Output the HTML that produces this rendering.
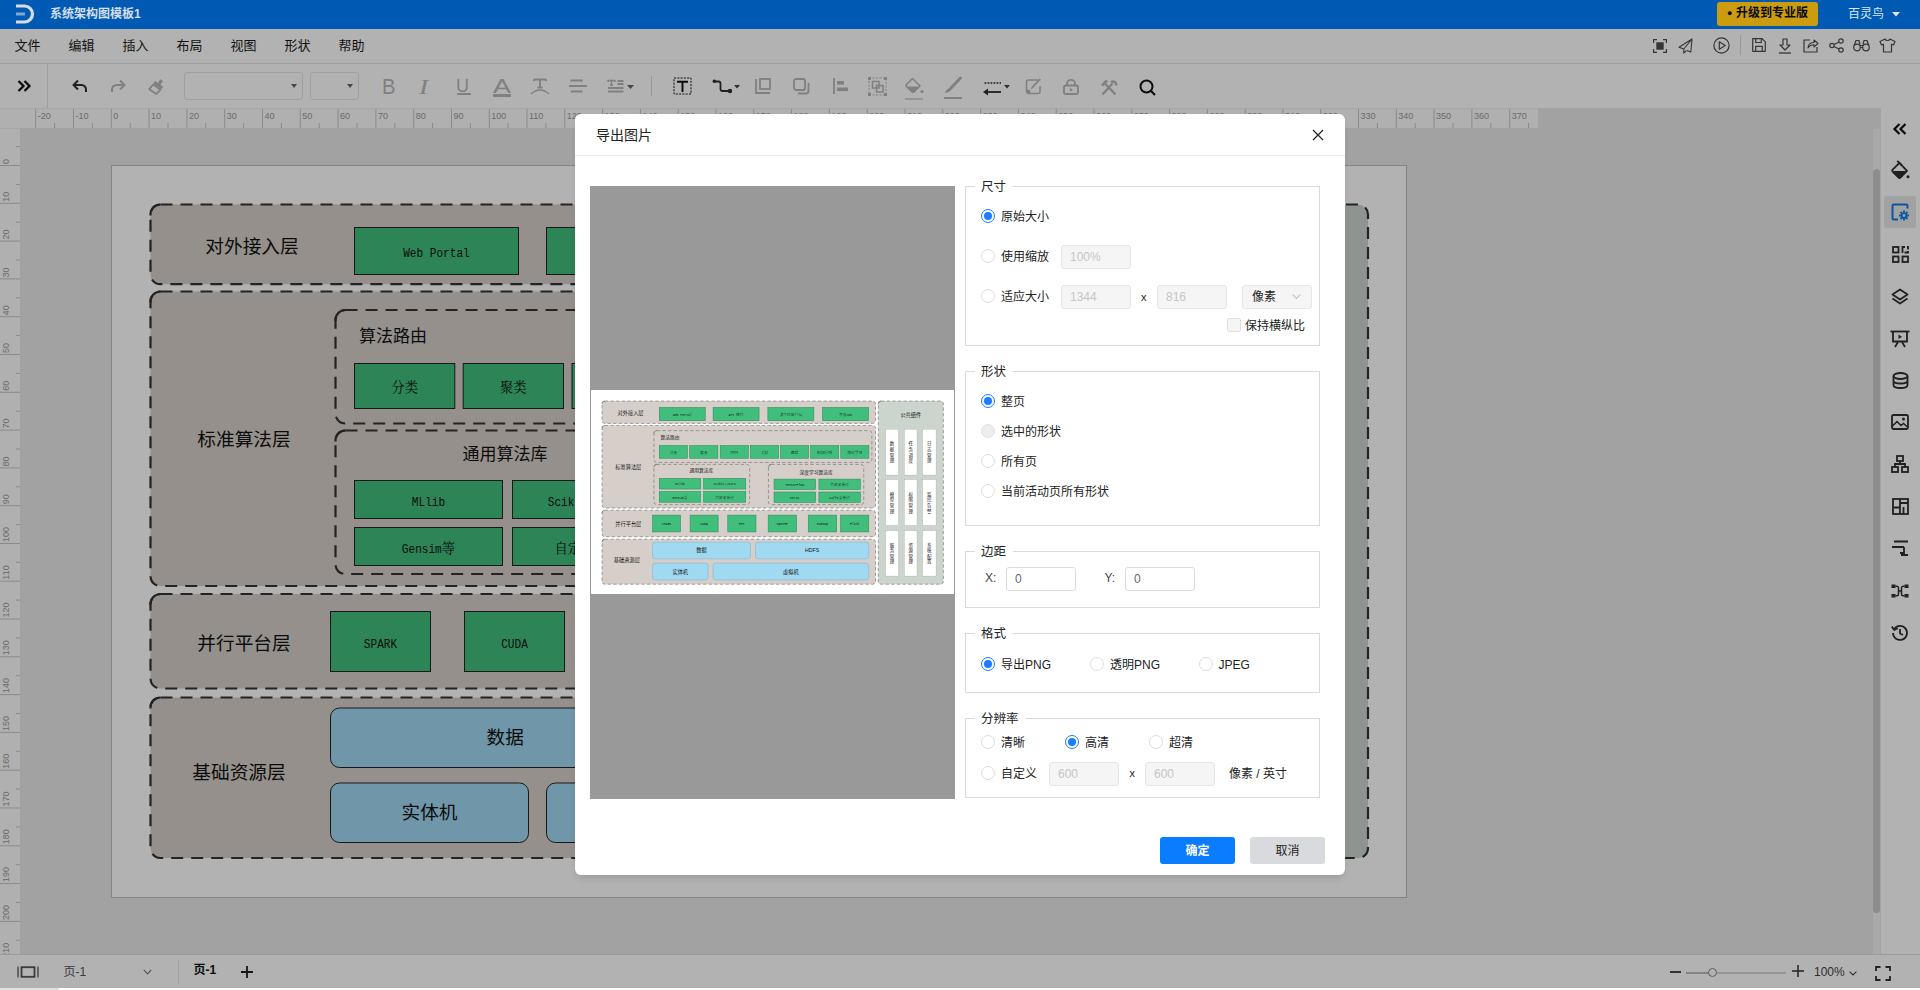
<!DOCTYPE html>
<html lang="zh-CN">
<head>
<meta charset="utf-8">
<title>系统架构图模板1</title>
<style>
*{box-sizing:border-box;margin:0;padding:0}
html,body{width:1920px;height:990px;overflow:hidden;background:#fff}
body{font-family:"Liberation Sans","Noto Sans CJK SC",sans-serif;font-size:12px;color:#222;position:relative}
.abs{position:absolute}
#app{position:absolute;left:0;top:0;width:1920px;height:990px;background:#fff;overflow:hidden}
#titlebar{position:absolute;left:0;top:0;width:1920px;height:29px;background:#005ab3}
#doctitle{position:absolute;left:50px;top:0;line-height:28px;font-size:12px;font-weight:bold;color:#d3def0;white-space:nowrap}
#upgrade{position:absolute;left:1717px;top:2px;width:101px;height:24px;border-radius:3px;background:#cb9c10;color:#0a0a0a;font-weight:bold;font-size:12px;line-height:23px;white-space:nowrap;text-align:center}
#user{position:absolute;left:1848px;top:0;line-height:28px;font-size:12px;color:#dde8f6;white-space:nowrap}
#menubar{position:absolute;left:0;top:29px;width:1920px;height:35px;background:#fff;border-bottom:1px solid #e2e2e2}
#menubar .mi{position:absolute;top:0;line-height:33px;font-size:13px;color:#1a1a1a;white-space:nowrap}
#toolbar{position:absolute;left:0;top:64px;width:1920px;height:44px;background:#fff}
.sel{position:absolute;top:8px;height:28px;border:1px solid #e6e6e6;border-radius:3px;background:#fff}
.sel:after{content:"";position:absolute;right:5px;top:11px;border:3.5px solid transparent;border-top:4px solid #666;border-bottom:0}
.vsep{position:absolute;width:1px;background:#dcdcdc}
.ic{position:absolute;overflow:visible}
#rulerh{position:absolute;left:20px;top:108px;width:1518px;height:20px;background:#fcfcfc;border-top:1px solid #f0f0f0;overflow:hidden}
#rulerv{position:absolute;left:0;top:128px;width:20px;height:826px;background:#fcfcfc;overflow:hidden}
#rcorner{position:absolute;left:0;top:108px;width:20px;height:20px;background:#fcfcfc;border-top:1px solid #f0f0f0}
#canvas{position:absolute;left:20px;top:128px;width:1861px;height:826px;background:#e8e8e8;overflow:hidden}
#rulerext{position:absolute;left:1538px;top:108px;width:343px;height:20px;background:#e8e8e8}
#vscroll{position:absolute;left:1872.5px;top:129px;width:7px;height:825px;background:#f3f3f3}
#vscroll i{position:absolute;left:0;top:40px;width:7px;height:744px;background:#cacaca;border-radius:3.5px}
#sidebar{position:absolute;left:1881px;top:108px;width:39px;height:846px;background:#fff}
#bottombar{position:absolute;left:0;top:954px;width:1920px;height:34px;background:#fff;border-top:1px solid #ddd}
#overlay{position:absolute;left:0;top:0;width:1920px;height:990px;background:rgba(0,0,0,.3)}
svg text.gl{font-family:"Liberation Sans","Noto Sans CJK SC",sans-serif;fill:#111}
svg text.st{font-family:"Liberation Mono","Noto Serif CJK SC",serif;fill:#111}
svg text.rt{font-family:"Liberation Sans",sans-serif;font-size:9px;fill:#9a9a9a}
/* dialog */
#dialog{position:absolute;left:575px;top:114px;width:770px;height:761px;background:#fff;border-radius:6px;box-shadow:0 5px 8px -3px rgba(0,0,0,.16)}
#dlgtitle{position:absolute;left:21px;top:0;height:43px;line-height:43px;font-size:14px;color:#222}
#dlghead{position:absolute;left:0;top:0;width:770px;height:42px;border-bottom:1px solid #ebebeb}
#preview{position:absolute;left:15px;top:72px;width:365px;height:613px;background:#999}
fieldset{position:absolute;left:390px;width:355px;border:1px solid #d9d9d9;border-radius:0}
.lg{position:absolute;left:9px;top:-9.5px;padding:0 7px 0 6px;background:#fff;font-size:12.5px;line-height:18px;color:#222;white-space:nowrap}
.fs{position:absolute;left:390px;width:355px;border:1px solid #d9d9d9}
.rd{position:absolute;width:14px;height:14px;border-radius:50%;border:1px solid #dcdcdc;background:#fff}
.rd.on{border:1px solid #1a7dff}
.rd.on:after{content:"";position:absolute;left:2px;top:2px;width:8px;height:8px;border-radius:50%;background:#1a7dff}
.rd.dis{background:#eee;border-color:#e2e2e2}
.lb{position:absolute;font-size:12px;line-height:16px;color:#222;white-space:nowrap}
.inp{position:absolute;width:70px;height:24px;border:1px solid #e6e6e6;border-radius:3px;background:#f5f5f5;color:#c6c6c6;font-size:12px;line-height:22px;padding-left:8px;white-space:nowrap}
.inp.en{background:#fff;color:#666;border-color:#dcdcdc}
.btn{position:absolute;top:723px;width:75px;height:27px;border-radius:3px;font-size:12px;line-height:29px;text-align:center}
</style>
</head>
<body>
<div id="app"><div id="menubar"><div class="mi" style="left:14.5px">文件</div><div class="mi" style="left:68.5px">编辑</div><div class="mi" style="left:122.5px">插入</div><div class="mi" style="left:176.5px">布局</div><div class="mi" style="left:230.5px">视图</div><div class="mi" style="left:284.5px">形状</div><div class="mi" style="left:338.5px">帮助</div><svg class="ic" style="left:1653.0px;top:9.5px" width="14" height="14" viewBox="0 0 14 14" fill="none" ><path d="M0.6,4 V0.6 H4 M10,0.6 H13.4 V4 M13.4,10 V13.4 H10 M4,13.4 H0.6 V10" stroke="#4d4d4d" stroke-width="1.2"/><rect x="3.3" y="3.3" width="7.4" height="7.4" fill="#4d4d4d"/></svg><svg class="ic" style="left:1678.0px;top:8.5px" width="15" height="16" viewBox="0 0 15 16" fill="none" ><path d="M14,1 L1,9.3 L5.8,11 L14,1 L12.8,14 L8.8,12.4 M5.8,11 V15.2 L8.3,12.6" stroke="#4d4d4d" stroke-width="1.1" stroke-linejoin="round"/></svg><svg class="ic" style="left:1712.5px;top:8.0px" width="17" height="17" viewBox="0 0 17 17" fill="none" ><circle cx="8.5" cy="8.5" r="7.6" stroke="#4d4d4d" stroke-width="1.2"/><path d="M6.3,4.8 L12.2,8.5 L6.3,12.2 Z" stroke="#4d4d4d" stroke-width="1.2" stroke-linejoin="round"/></svg><div class="vsep" style="left:1740px;top:6px;height:20px"></div><svg class="ic" style="left:1752.0px;top:9.2px" width="14" height="14" viewBox="0 0 14 14" fill="none" ><path d="M0.7,0.7 H10.2 L13.3,3.8 V13.3 H0.7 Z" stroke="#4d4d4d" stroke-width="1.2" stroke-linejoin="round"/><path d="M3.7,0.7 V4.5 H9.3 V0.7 M3.7,13.3 V8.3 H10.3 V13.3" stroke="#4d4d4d" stroke-width="1.2"/></svg><svg class="ic" style="left:1778.0px;top:8.5px" width="14" height="16" viewBox="0 0 14 16" fill="none" ><path d="M5,1 H9 V7 H12 L7,12 L2,7 H5 Z" stroke="#4d4d4d" stroke-width="1.2" stroke-linejoin="round"/><path d="M1,15 H13" stroke="#4d4d4d" stroke-width="1.3"/></svg><svg class="ic" style="left:1803.0px;top:9.0px" width="16" height="15" viewBox="0 0 16 15" fill="none" ><path d="M7,2 H1 V14 H14 V9" stroke="#4d4d4d" stroke-width="1.2"/><path d="M5,10 C5,6 8,4.5 11,4.5 V2 L15,5.5 L11,9 V6.8 C8.5,6.8 6.5,7.5 5,10 Z" stroke="#4d4d4d" stroke-width="1.1" stroke-linejoin="round"/></svg><svg class="ic" style="left:1828.5px;top:9.0px" width="15" height="15" viewBox="0 0 15 15" fill="none" ><circle cx="3" cy="7.5" r="2.2" stroke="#4d4d4d" stroke-width="1.2"/><circle cx="12" cy="3" r="2.2" stroke="#4d4d4d" stroke-width="1.2"/><circle cx="12" cy="12" r="2.2" stroke="#4d4d4d" stroke-width="1.2"/><path d="M5,6.5 L10,4 M5,8.5 L10,11" stroke="#4d4d4d" stroke-width="1.2"/></svg><svg class="ic" style="left:1853.0px;top:10.0px" width="17" height="13" viewBox="0 0 17 13" fill="none" ><circle cx="4" cy="8.5" r="3.3" stroke="#4d4d4d" stroke-width="1.2"/><circle cx="13" cy="8.5" r="3.3" stroke="#4d4d4d" stroke-width="1.2"/><path d="M1.2,6.5 L3,1.5 H6 L7,5.5 M15.8,6.5 L14,1.5 H11 L10,5.5 M7,6.5 H10 M7.2,8.5 H9.8" stroke="#4d4d4d" stroke-width="1.2" stroke-linejoin="round"/></svg><svg class="ic" style="left:1878.5px;top:9.0px" width="17" height="15" viewBox="0 0 17 15" fill="none" ><path d="M6,1 C6.5,3 10.5,3 11,1 L16,3.5 L14.5,7 L12.5,6.2 V14 H4.5 V6.2 L2.5,7 L1,3.5 Z" stroke="#4d4d4d" stroke-width="1.2" stroke-linejoin="round"/></svg></div><div id="toolbar"><svg class="ic" style="left:16.5px;top:16.0px" width="14" height="12" viewBox="0 0 14 12" fill="none" ><path d="M1.5,1 L6.5,6 L1.5,11 M7.5,1 L12.5,6 L7.5,11" stroke="#111" stroke-width="2.2"/></svg><div class="vsep" style="left:47px;top:0;height:44px;background:#e6e6e6"></div><svg class="ic" style="left:72.0px;top:15.0px" width="16" height="14" viewBox="0 0 16 14" fill="none" ><path d="M6,1.5 L1.5,6 L6,10.5" stroke="#2e2e2e" stroke-width="2" stroke-linejoin="round"/><path d="M2,6 H9.5 A4.5,4.5 0 0 1 14,10.5 V13" stroke="#2e2e2e" stroke-width="2"/></svg><svg class="ic" style="left:110.0px;top:15.0px" width="16" height="14" viewBox="0 0 16 14" fill="none" ><path d="M10,1.5 L14.5,6 L10,10.5" stroke="#b8b8b8" stroke-width="2" stroke-linejoin="round"/><path d="M14,6 H6.5 A4.5,4.5 0 0 0 2,10.5 V13" stroke="#b8b8b8" stroke-width="2"/></svg><svg class="ic" style="left:147.5px;top:14.0px" width="18" height="16" viewBox="0 0 18 16" fill="none" ><g transform="rotate(35 9 8)"><path d="M8,0.5 H11 V5 H14.5 V8 H4.5 V5 H8 Z" fill="#b8b8b8"/><path d="M5,9 H14 L13,15 H4.5 Z" stroke="#b8b8b8" stroke-width="1.8" stroke-linejoin="round"/></g></svg><div class="sel" style="left:184px;width:119px"></div><div class="sel" style="left:310px;width:49px"></div><div class="abs" style="left:381.5px;top:11px;width:14px;font-size:22px;line-height:24px;color:#b8b8b8;transform:scaleX(.92);transform-origin:0 0">B</div><div class="abs" style="left:419px;top:11px;font-size:22px;line-height:24px;color:#b8b8b8;font-family:'Liberation Serif',serif;font-style:italic;transform:scaleX(1.25);transform-origin:0 0">I</div><div class="abs" style="left:456px;top:11px;font-size:18px;line-height:22px;color:#b8b8b8">U</div><div class="abs" style="left:457px;top:29px;width:14px;height:1.5px;background:#b8b8b8"></div><div class="abs" style="left:493px;top:10.5px;font-size:19.5px;line-height:22px;color:#b8b8b8;transform:scaleX(1.38);transform-origin:0 0">A</div><div class="abs" style="left:493px;top:30px;width:18px;height:2.5px;background:#b8b8b8"></div><svg class="ic" style="left:530.0px;top:13.5px" width="20" height="17" viewBox="0 0 20 17" fill="none" ><path d="M4,1.5 H16 M4,1 V3.2 M16,1 V3.2 M10,1.5 V9.5 M7.5,9.5 H12.5" stroke="#b8b8b8" stroke-width="1.8"/><path d="M1,16 Q10,8 19,16" stroke="#b8b8b8" stroke-width="1.5"/></svg><svg class="ic" style="left:569.0px;top:15.0px" width="18" height="14" viewBox="0 0 18 14" fill="none" ><path d="M1.3,1.5 H13.8 M0,7 H18 M1.8,12.5 H13.5" stroke="#b8b8b8" stroke-width="1.8"/></svg><svg class="ic" style="left:607.5px;top:14.5px" width="16" height="15" viewBox="0 0 16 15" fill="none" ><path d="M0,1.5 H7 M0,1 V3 M7,1 V3 M3.5,1.5 V6 M2,6 H5" stroke="#b8b8b8" stroke-width="1.4"/><path d="M9.5,2 H15.5 M9.5,5 H15.5 M0,9 H15.5 M0,12.5 H15.5" stroke="#b8b8b8" stroke-width="1.8"/></svg><svg class="ic" style="left:626.5px;top:21.0px" width="7" height="4" viewBox="0 0 7 4" fill="none" ><path d="M0,0 H7 L3.5,4 Z" fill="#666"/></svg><div class="vsep" style="left:651px;top:12px;height:20px"></div><svg class="ic" style="left:673.0px;top:13.0px" width="19" height="18" viewBox="0 0 19 18" fill="none" ><rect x="1" y="1" width="17" height="16" stroke="#111" stroke-width="1" stroke-dasharray="2 1.3"/><path d="M4,4.8 H15 M9.5,4.8 V15" stroke="#111" stroke-width="1.9"/></svg><svg class="ic" style="left:712.0px;top:15.0px" width="22" height="14" viewBox="0 0 22 14" fill="none" ><path d="M2.5,2.5 H6.5 Q8.5,2.5 8.5,4.5 V10 Q8.5,12 10.5,12 H16" stroke="#2e2e2e" stroke-width="1.8"/><circle cx="2.3" cy="2.3" r="1.7" fill="#2e2e2e"/><circle cx="18" cy="12" r="2.2" fill="#2e2e2e"/></svg><svg class="ic" style="left:733.5px;top:21.0px" width="6" height="4" viewBox="0 0 6 4" fill="none" ><path d="M0,0 H6 L3,3.5 Z" fill="#444"/></svg><svg class="ic" style="left:755.0px;top:14.0px" width="16" height="16" viewBox="0 0 16 16" fill="none" ><path d="M1,1 V15 H15" stroke="#b8b8b8" stroke-width="1.8"/><rect x="5" y="1" width="10" height="10" stroke="#b8b8b8" stroke-width="1.8"/></svg><svg class="ic" style="left:792.5px;top:13.5px" width="17" height="17" viewBox="0 0 17 17" fill="none" ><rect x="1" y="1" width="11" height="11" rx="2" stroke="#b8b8b8" stroke-width="1.8"/><path d="M15.5,5 V13 Q15.5,15.5 13,15.5 H5" stroke="#b8b8b8" stroke-width="1.8"/></svg><svg class="ic" style="left:832.5px;top:14.0px" width="15" height="16" viewBox="0 0 15 16" fill="none" ><path d="M1,0 V16" stroke="#b8b8b8" stroke-width="1.8"/><rect x="4" y="3" width="7" height="3.6" fill="#b8b8b8"/><rect x="4" y="9.5" width="11" height="3.6" fill="#b8b8b8"/></svg><svg class="ic" style="left:867.5px;top:12.5px" width="19" height="19" viewBox="0 0 19 19" fill="none" ><rect x="1" y="1" width="17" height="17" stroke="#b8b8b8" stroke-width="1" stroke-dasharray="2 1.5"/><rect x="0" y="0" width="3" height="3" fill="#b8b8b8"/><rect x="16" y="0" width="3" height="3" fill="#b8b8b8"/><rect x="0" y="16" width="3" height="3" fill="#b8b8b8"/><rect x="16" y="16" width="3" height="3" fill="#b8b8b8"/><rect x="4.5" y="4.5" width="6.5" height="6.5" stroke="#b8b8b8" stroke-width="1.5"/><rect x="8.5" y="8.5" width="6.5" height="6.5" stroke="#b8b8b8" stroke-width="1.5"/></svg><svg class="ic" style="left:904.5px;top:12.5px" width="19" height="17" viewBox="0 0 19 17" fill="none" ><path d="M7,1 L15,9 L9,15 Q8,16 7,15 L1.5,9.5 Q0.5,8.5 1.5,7.5 L7.5,1.5" stroke="#b8b8b8" stroke-width="1.5" stroke-linejoin="round"/><path d="M2,9.5 H14.5 L9,15 Q8,16 7,15 Z" fill="#b8b8b8"/><circle cx="17" cy="14.5" r="1.5" fill="#b8b8b8"/></svg><div class="abs" style="left:905px;top:33.5px;width:18px;height:2px;background:#d4d4d4"></div><svg class="ic" style="left:944.0px;top:12.5px" width="18" height="17" viewBox="0 0 18 17" fill="none" ><path d="M16.5,1 L7,11" stroke="#b8b8b8" stroke-width="3" stroke-linecap="round"/><path d="M6,11 Q2.5,11.5 1,16 Q5.5,15.5 7.5,12.5 Z" fill="#b8b8b8"/></svg><div class="abs" style="left:944px;top:33px;width:18px;height:2px;background:#b8b8b8"></div><svg class="ic" style="left:982.0px;top:16.5px" width="20" height="14" viewBox="0 0 20 14" fill="none" ><path d="M2.5,2 H19" stroke="#2e2e2e" stroke-width="1.6" stroke-dasharray="1.8 1.2"/><path d="M3,11 H19" stroke="#2e2e2e" stroke-width="1.8"/><path d="M6,7.5 L1,11 L6,14.5 Z" fill="#2e2e2e"/></svg><svg class="ic" style="left:1003.5px;top:21.0px" width="6" height="4" viewBox="0 0 6 4" fill="none" ><path d="M0,0 H6 L3,3.5 Z" fill="#444"/></svg><svg class="ic" style="left:1024.5px;top:13.5px" width="18" height="17" viewBox="0 0 18 17" fill="none" ><path d="M13,2 H3.5 Q1.5,2 1.5,4 V13.5 Q1.5,15.5 3.5,15.5 H13 Q15,15.5 15,13.5 V8" stroke="#b8b8b8" stroke-width="1.5"/><path d="M16,1.5 L8,10 L5.5,11.5 L6.5,9 L14.5,0.5 Z" fill="#b8b8b8"/><circle cx="3.5" cy="13.5" r="2" fill="#b8b8b8"/></svg><svg class="ic" style="left:1063.0px;top:15.0px" width="16" height="16" viewBox="0 0 16 16" fill="none" ><rect x="1" y="6.5" width="14" height="8.5" rx="1.5" stroke="#b8b8b8" stroke-width="1.8"/><path d="M4,6.5 V4.5 A4,3.7 0 0 1 12,4.5 V6.5" stroke="#b8b8b8" stroke-width="1.8"/><circle cx="8" cy="10.8" r="1.4" fill="#b8b8b8"/></svg><svg class="ic" style="left:1099.5px;top:14.5px" width="18" height="17" viewBox="0 0 18 17" fill="none" ><path d="M2.5,15.5 L12.5,4.5 M15.5,15.5 L5,4.5" stroke="#b8b8b8" stroke-width="2.2"/><path d="M2,6.5 L7,1.5" stroke="#b8b8b8" stroke-width="2.6"/><path d="M11,3.5 A3,3 0 0 1 16,6.5" stroke="#b8b8b8" stroke-width="2.4"/></svg><svg class="ic" style="left:1138.5px;top:14.5px" width="17" height="17" viewBox="0 0 17 17" fill="none" ><circle cx="7.5" cy="7.5" r="6" stroke="#111" stroke-width="2"/><path d="M12,12 L16,16" stroke="#111" stroke-width="2.2"/></svg></div><div id="rcorner"></div><div id="rulerext"></div><div id="rulerh"><svg width="1518" height="20" style="position:absolute;left:0;top:-1px"><path d="M15.7,0 V20" stroke="#c6c6c6" stroke-width="1"/><path d="M34.6,15 V20" stroke="#c6c6c6" stroke-width="1"/><text class="rt" x="17.7" y="11">-20</text><path d="M53.5,0 V20" stroke="#c6c6c6" stroke-width="1"/><path d="M72.4,15 V20" stroke="#c6c6c6" stroke-width="1"/><text class="rt" x="55.5" y="11">-10</text><path d="M91.3,0 V20" stroke="#c6c6c6" stroke-width="1"/><path d="M110.2,15 V20" stroke="#c6c6c6" stroke-width="1"/><text class="rt" x="93.3" y="11">0</text><path d="M129.1,0 V20" stroke="#c6c6c6" stroke-width="1"/><path d="M148.0,15 V20" stroke="#c6c6c6" stroke-width="1"/><text class="rt" x="131.1" y="11">10</text><path d="M166.9,0 V20" stroke="#c6c6c6" stroke-width="1"/><path d="M185.8,15 V20" stroke="#c6c6c6" stroke-width="1"/><text class="rt" x="168.9" y="11">20</text><path d="M204.7,0 V20" stroke="#c6c6c6" stroke-width="1"/><path d="M223.6,15 V20" stroke="#c6c6c6" stroke-width="1"/><text class="rt" x="206.7" y="11">30</text><path d="M242.5,0 V20" stroke="#c6c6c6" stroke-width="1"/><path d="M261.4,15 V20" stroke="#c6c6c6" stroke-width="1"/><text class="rt" x="244.5" y="11">40</text><path d="M280.3,0 V20" stroke="#c6c6c6" stroke-width="1"/><path d="M299.2,15 V20" stroke="#c6c6c6" stroke-width="1"/><text class="rt" x="282.3" y="11">50</text><path d="M318.1,0 V20" stroke="#c6c6c6" stroke-width="1"/><path d="M337.0,15 V20" stroke="#c6c6c6" stroke-width="1"/><text class="rt" x="320.1" y="11">60</text><path d="M355.9,0 V20" stroke="#c6c6c6" stroke-width="1"/><path d="M374.8,15 V20" stroke="#c6c6c6" stroke-width="1"/><text class="rt" x="357.9" y="11">70</text><path d="M393.7,0 V20" stroke="#c6c6c6" stroke-width="1"/><path d="M412.6,15 V20" stroke="#c6c6c6" stroke-width="1"/><text class="rt" x="395.7" y="11">80</text><path d="M431.5,0 V20" stroke="#c6c6c6" stroke-width="1"/><path d="M450.4,15 V20" stroke="#c6c6c6" stroke-width="1"/><text class="rt" x="433.5" y="11">90</text><path d="M469.3,0 V20" stroke="#c6c6c6" stroke-width="1"/><path d="M488.1,15 V20" stroke="#c6c6c6" stroke-width="1"/><text class="rt" x="471.3" y="11">100</text><path d="M507.0,0 V20" stroke="#c6c6c6" stroke-width="1"/><path d="M525.9,15 V20" stroke="#c6c6c6" stroke-width="1"/><text class="rt" x="509.0" y="11">110</text><path d="M544.8,0 V20" stroke="#c6c6c6" stroke-width="1"/><path d="M563.7,15 V20" stroke="#c6c6c6" stroke-width="1"/><text class="rt" x="546.8" y="11">120</text><path d="M582.6,0 V20" stroke="#c6c6c6" stroke-width="1"/><path d="M601.5,15 V20" stroke="#c6c6c6" stroke-width="1"/><text class="rt" x="584.6" y="11">130</text><path d="M620.4,0 V20" stroke="#c6c6c6" stroke-width="1"/><path d="M639.3,15 V20" stroke="#c6c6c6" stroke-width="1"/><text class="rt" x="622.4" y="11">140</text><path d="M658.2,0 V20" stroke="#c6c6c6" stroke-width="1"/><path d="M677.1,15 V20" stroke="#c6c6c6" stroke-width="1"/><text class="rt" x="660.2" y="11">150</text><path d="M696.0,0 V20" stroke="#c6c6c6" stroke-width="1"/><path d="M714.9,15 V20" stroke="#c6c6c6" stroke-width="1"/><text class="rt" x="698.0" y="11">160</text><path d="M733.8,0 V20" stroke="#c6c6c6" stroke-width="1"/><path d="M752.7,15 V20" stroke="#c6c6c6" stroke-width="1"/><text class="rt" x="735.8" y="11">170</text><path d="M771.6,0 V20" stroke="#c6c6c6" stroke-width="1"/><path d="M790.5,15 V20" stroke="#c6c6c6" stroke-width="1"/><text class="rt" x="773.6" y="11">180</text><path d="M809.4,0 V20" stroke="#c6c6c6" stroke-width="1"/><path d="M828.3,15 V20" stroke="#c6c6c6" stroke-width="1"/><text class="rt" x="811.4" y="11">190</text><path d="M847.2,0 V20" stroke="#c6c6c6" stroke-width="1"/><path d="M866.1,15 V20" stroke="#c6c6c6" stroke-width="1"/><text class="rt" x="849.2" y="11">200</text><path d="M885.0,0 V20" stroke="#c6c6c6" stroke-width="1"/><path d="M903.9,15 V20" stroke="#c6c6c6" stroke-width="1"/><text class="rt" x="887.0" y="11">210</text><path d="M922.8,0 V20" stroke="#c6c6c6" stroke-width="1"/><path d="M941.7,15 V20" stroke="#c6c6c6" stroke-width="1"/><text class="rt" x="924.8" y="11">220</text><path d="M960.6,0 V20" stroke="#c6c6c6" stroke-width="1"/><path d="M979.5,15 V20" stroke="#c6c6c6" stroke-width="1"/><text class="rt" x="962.6" y="11">230</text><path d="M998.4,0 V20" stroke="#c6c6c6" stroke-width="1"/><path d="M1017.3,15 V20" stroke="#c6c6c6" stroke-width="1"/><text class="rt" x="1000.4" y="11">240</text><path d="M1036.2,0 V20" stroke="#c6c6c6" stroke-width="1"/><path d="M1055.1,15 V20" stroke="#c6c6c6" stroke-width="1"/><text class="rt" x="1038.2" y="11">250</text><path d="M1074.0,0 V20" stroke="#c6c6c6" stroke-width="1"/><path d="M1092.9,15 V20" stroke="#c6c6c6" stroke-width="1"/><text class="rt" x="1076.0" y="11">260</text><path d="M1111.8,0 V20" stroke="#c6c6c6" stroke-width="1"/><path d="M1130.7,15 V20" stroke="#c6c6c6" stroke-width="1"/><text class="rt" x="1113.8" y="11">270</text><path d="M1149.6,0 V20" stroke="#c6c6c6" stroke-width="1"/><path d="M1168.5,15 V20" stroke="#c6c6c6" stroke-width="1"/><text class="rt" x="1151.6" y="11">280</text><path d="M1187.4,0 V20" stroke="#c6c6c6" stroke-width="1"/><path d="M1206.3,15 V20" stroke="#c6c6c6" stroke-width="1"/><text class="rt" x="1189.4" y="11">290</text><path d="M1225.2,0 V20" stroke="#c6c6c6" stroke-width="1"/><path d="M1244.0,15 V20" stroke="#c6c6c6" stroke-width="1"/><text class="rt" x="1227.2" y="11">300</text><path d="M1262.9,0 V20" stroke="#c6c6c6" stroke-width="1"/><path d="M1281.8,15 V20" stroke="#c6c6c6" stroke-width="1"/><text class="rt" x="1264.9" y="11">310</text><path d="M1300.7,0 V20" stroke="#c6c6c6" stroke-width="1"/><path d="M1319.6,15 V20" stroke="#c6c6c6" stroke-width="1"/><text class="rt" x="1302.7" y="11">320</text><path d="M1338.5,0 V20" stroke="#c6c6c6" stroke-width="1"/><path d="M1357.4,15 V20" stroke="#c6c6c6" stroke-width="1"/><text class="rt" x="1340.5" y="11">330</text><path d="M1376.3,0 V20" stroke="#c6c6c6" stroke-width="1"/><path d="M1395.2,15 V20" stroke="#c6c6c6" stroke-width="1"/><text class="rt" x="1378.3" y="11">340</text><path d="M1414.1,0 V20" stroke="#c6c6c6" stroke-width="1"/><path d="M1433.0,15 V20" stroke="#c6c6c6" stroke-width="1"/><text class="rt" x="1416.1" y="11">350</text><path d="M1451.9,0 V20" stroke="#c6c6c6" stroke-width="1"/><path d="M1470.8,15 V20" stroke="#c6c6c6" stroke-width="1"/><text class="rt" x="1453.9" y="11">360</text><path d="M1489.7,0 V20" stroke="#c6c6c6" stroke-width="1"/><path d="M1508.6,15 V20" stroke="#c6c6c6" stroke-width="1"/><text class="rt" x="1491.7" y="11">370</text></svg></div><div id="rulerv"><svg width="20" height="826" style="position:absolute;left:0;top:0"><path d="M0,-0.3 H20" stroke="#c6c6c6" stroke-width="1"/><path d="M16,18.6 H20" stroke="#c6c6c6" stroke-width="1"/><text class="rt" transform="translate(9.3,-1.8) rotate(-90)">-10</text><path d="M0,37.5 H20" stroke="#c6c6c6" stroke-width="1"/><path d="M16,56.4 H20" stroke="#c6c6c6" stroke-width="1"/><text class="rt" transform="translate(9.3,36.0) rotate(-90)">0</text><path d="M0,75.3 H20" stroke="#c6c6c6" stroke-width="1"/><path d="M16,94.2 H20" stroke="#c6c6c6" stroke-width="1"/><text class="rt" transform="translate(9.3,73.8) rotate(-90)">10</text><path d="M0,113.1 H20" stroke="#c6c6c6" stroke-width="1"/><path d="M16,132.0 H20" stroke="#c6c6c6" stroke-width="1"/><text class="rt" transform="translate(9.3,111.6) rotate(-90)">20</text><path d="M0,150.9 H20" stroke="#c6c6c6" stroke-width="1"/><path d="M16,169.8 H20" stroke="#c6c6c6" stroke-width="1"/><text class="rt" transform="translate(9.3,149.4) rotate(-90)">30</text><path d="M0,188.7 H20" stroke="#c6c6c6" stroke-width="1"/><path d="M16,207.6 H20" stroke="#c6c6c6" stroke-width="1"/><text class="rt" transform="translate(9.3,187.2) rotate(-90)">40</text><path d="M0,226.5 H20" stroke="#c6c6c6" stroke-width="1"/><path d="M16,245.4 H20" stroke="#c6c6c6" stroke-width="1"/><text class="rt" transform="translate(9.3,225.0) rotate(-90)">50</text><path d="M0,264.3 H20" stroke="#c6c6c6" stroke-width="1"/><path d="M16,283.2 H20" stroke="#c6c6c6" stroke-width="1"/><text class="rt" transform="translate(9.3,262.8) rotate(-90)">60</text><path d="M0,302.1 H20" stroke="#c6c6c6" stroke-width="1"/><path d="M16,321.0 H20" stroke="#c6c6c6" stroke-width="1"/><text class="rt" transform="translate(9.3,300.6) rotate(-90)">70</text><path d="M0,339.9 H20" stroke="#c6c6c6" stroke-width="1"/><path d="M16,358.8 H20" stroke="#c6c6c6" stroke-width="1"/><text class="rt" transform="translate(9.3,338.4) rotate(-90)">80</text><path d="M0,377.7 H20" stroke="#c6c6c6" stroke-width="1"/><path d="M16,396.6 H20" stroke="#c6c6c6" stroke-width="1"/><text class="rt" transform="translate(9.3,376.2) rotate(-90)">90</text><path d="M0,415.5 H20" stroke="#c6c6c6" stroke-width="1"/><path d="M16,434.3 H20" stroke="#c6c6c6" stroke-width="1"/><text class="rt" transform="translate(9.3,414.0) rotate(-90)">100</text><path d="M0,453.2 H20" stroke="#c6c6c6" stroke-width="1"/><path d="M16,472.1 H20" stroke="#c6c6c6" stroke-width="1"/><text class="rt" transform="translate(9.3,451.7) rotate(-90)">110</text><path d="M0,491.0 H20" stroke="#c6c6c6" stroke-width="1"/><path d="M16,509.9 H20" stroke="#c6c6c6" stroke-width="1"/><text class="rt" transform="translate(9.3,489.5) rotate(-90)">120</text><path d="M0,528.8 H20" stroke="#c6c6c6" stroke-width="1"/><path d="M16,547.7 H20" stroke="#c6c6c6" stroke-width="1"/><text class="rt" transform="translate(9.3,527.3) rotate(-90)">130</text><path d="M0,566.6 H20" stroke="#c6c6c6" stroke-width="1"/><path d="M16,585.5 H20" stroke="#c6c6c6" stroke-width="1"/><text class="rt" transform="translate(9.3,565.1) rotate(-90)">140</text><path d="M0,604.4 H20" stroke="#c6c6c6" stroke-width="1"/><path d="M16,623.3 H20" stroke="#c6c6c6" stroke-width="1"/><text class="rt" transform="translate(9.3,602.9) rotate(-90)">150</text><path d="M0,642.2 H20" stroke="#c6c6c6" stroke-width="1"/><path d="M16,661.1 H20" stroke="#c6c6c6" stroke-width="1"/><text class="rt" transform="translate(9.3,640.7) rotate(-90)">160</text><path d="M0,680.0 H20" stroke="#c6c6c6" stroke-width="1"/><path d="M16,698.9 H20" stroke="#c6c6c6" stroke-width="1"/><text class="rt" transform="translate(9.3,678.5) rotate(-90)">170</text><path d="M0,717.8 H20" stroke="#c6c6c6" stroke-width="1"/><path d="M16,736.7 H20" stroke="#c6c6c6" stroke-width="1"/><text class="rt" transform="translate(9.3,716.3) rotate(-90)">180</text><path d="M0,755.6 H20" stroke="#c6c6c6" stroke-width="1"/><path d="M16,774.5 H20" stroke="#c6c6c6" stroke-width="1"/><text class="rt" transform="translate(9.3,754.1) rotate(-90)">190</text><path d="M0,793.4 H20" stroke="#c6c6c6" stroke-width="1"/><path d="M16,812.3 H20" stroke="#c6c6c6" stroke-width="1"/><text class="rt" transform="translate(9.3,791.9) rotate(-90)">200</text><path d="M0,831.2 H20" stroke="#c6c6c6" stroke-width="1"/><path d="M16,850.1 H20" stroke="#c6c6c6" stroke-width="1"/><text class="rt" transform="translate(9.3,829.7) rotate(-90)">210</text></svg></div><div id="canvas"><svg style="position:absolute;left:-20px;top:-128px" width="1893" height="954" viewBox="0 0 1893 954"><rect x="111.5" y="165.5" width="1295" height="732" fill="#fff" stroke="#bdbdbd" stroke-width="1"/><rect x="150.5" y="204.5" width="975.5" height="79.69999999999999" rx="10" fill="#d6cfc9" stroke="#333" stroke-width="2.2" stroke-dasharray="12 8"/><path d="M150.5,215.5 A10,10 0 0 1 160.5,204.5" fill="none" stroke="#333" stroke-width="2.2"/>
<text x="252" y="246" font-size="18.67" text-anchor="middle" class="gl" dominant-baseline="central">对外接入层</text>
<rect x="354.5" y="227.5" width="164.0" height="47.0" fill="#41bd7c" stroke="#222" stroke-width="1"/><text class="st" transform="translate(403.18,257.00) scale(.8333,1)" font-size="13.33" xml:space="preserve">Web Portal</text>
<rect x="546.5" y="227.5" width="164.0" height="47.0" fill="#41bd7c" stroke="#222" stroke-width="1"/><text class="st" transform="translate(601.84,257.00) scale(.8333,1)" font-size="13.33" xml:space="preserve">API </text><text class="st" x="628.50" y="257.00" font-size="13.33">接口</text>
<rect x="742" y="227.5" width="164" height="47.0" fill="#41bd7c" stroke="#222" stroke-width="1"/><text class="st" x="784.01" y="257.00" font-size="13.33">命令行客户端</text>
<rect x="937" y="227.5" width="164" height="47.0" fill="#41bd7c" stroke="#222" stroke-width="1"/><text class="st" x="995.67" y="257.00" font-size="13.33">开放</text><text class="st" transform="translate(1022.33,257.00) scale(.8333,1)" font-size="13.33" xml:space="preserve">SDK</text>
<rect x="150.5" y="291.5" width="975.5" height="294.5" rx="10" fill="#d6cfc9" stroke="#333" stroke-width="2.2" stroke-dasharray="12 8"/><path d="M150.5,302.5 A10,10 0 0 1 160.5,291.5" fill="none" stroke="#333" stroke-width="2.2"/>
<text x="244" y="439" font-size="18.67" text-anchor="middle" class="gl" dominant-baseline="central">标准算法层</text>
<rect x="335.5" y="310" width="777.5" height="113.5" rx="10" fill="#d6cfc9" stroke="#333" stroke-width="2.2" stroke-dasharray="12 8"/><path d="M335.5,321 A10,10 0 0 1 345.5,310" fill="none" stroke="#333" stroke-width="2.2"/>
<text x="359" y="336" font-size="17" text-anchor="start" class="gl" dominant-baseline="central">算法路由</text>
<rect x="354.5" y="363.5" width="100.30000000000001" height="45.0" fill="#41bd7c" stroke="#222" stroke-width="1"/><text class="st" x="391.32" y="392.00" font-size="13.33">分类</text>
<rect x="463.2" y="363.5" width="100.30000000000001" height="45.0" fill="#41bd7c" stroke="#222" stroke-width="1"/><text class="st" x="500.02" y="392.00" font-size="13.33">聚类</text>
<rect x="572" y="363.5" width="100.29999999999995" height="45.0" fill="#41bd7c" stroke="#222" stroke-width="1"/><text class="st" x="608.82" y="392.00" font-size="13.33">回归</text>
<rect x="679.5" y="363.5" width="100.29999999999995" height="45.0" fill="#41bd7c" stroke="#222" stroke-width="1"/><text class="st" x="716.32" y="392.00" font-size="13.33">关联</text>
<rect x="787" y="363.5" width="100.29999999999995" height="45.0" fill="#41bd7c" stroke="#222" stroke-width="1"/><text class="st" x="823.82" y="392.00" font-size="13.33">推荐</text>
<rect x="894.5" y="363.5" width="100.29999999999995" height="45.0" fill="#41bd7c" stroke="#222" stroke-width="1"/><text class="st" x="917.99" y="392.00" font-size="13.33">时间序列</text>
<rect x="1002" y="363.5" width="100.29999999999995" height="45.0" fill="#41bd7c" stroke="#222" stroke-width="1"/><text class="st" x="1025.49" y="392.00" font-size="13.33">深度学习</text>
<rect x="335.5" y="430.5" width="341.5" height="143.5" rx="10" fill="#d6cfc9" stroke="#333" stroke-width="2.2" stroke-dasharray="12 8"/><path d="M335.5,441.5 A10,10 0 0 1 345.5,430.5" fill="none" stroke="#333" stroke-width="2.2"/>
<text x="505" y="454" font-size="17" text-anchor="middle" class="gl" dominant-baseline="central">通用算法库</text>
<rect x="354.5" y="480.5" width="148.0" height="38.0" fill="#41bd7c" stroke="#222" stroke-width="1"/><text class="st" transform="translate(411.84,505.50) scale(.8333,1)" font-size="13.33" xml:space="preserve">MLlib</text>
<rect x="512.5" y="480.5" width="150.5" height="38.0" fill="#41bd7c" stroke="#222" stroke-width="1"/><text class="st" transform="translate(547.76,505.50) scale(.8333,1)" font-size="13.33" xml:space="preserve">Scikit-Learn</text>
<rect x="354.5" y="527.5" width="148.0" height="38.0" fill="#41bd7c" stroke="#222" stroke-width="1"/><text class="st" transform="translate(401.84,552.50) scale(.8333,1)" font-size="13.33" xml:space="preserve">Gensim</text><text class="st" x="441.83" y="552.50" font-size="13.33">等</text>
<rect x="512.5" y="527.5" width="150.5" height="38.0" fill="#41bd7c" stroke="#222" stroke-width="1"/><text class="st" x="554.42" y="552.50" font-size="13.33">自定义算法</text>
<rect x="744" y="430.5" width="340" height="143.5" rx="10" fill="#d6cfc9" stroke="#333" stroke-width="2.2" stroke-dasharray="12 8"/><path d="M744,441.5 A10,10 0 0 1 754,430.5" fill="none" stroke="#333" stroke-width="2.2"/>
<text x="914" y="458" font-size="17" text-anchor="middle" class="gl" dominant-baseline="central">深度学习算法库</text>
<rect x="764" y="483" width="148" height="37" fill="#41bd7c" stroke="#222" stroke-width="1"/><text class="st" transform="translate(804.67,507.50) scale(.8333,1)" font-size="13.33" xml:space="preserve">TensorFlow</text>
<rect x="924" y="483" width="148" height="37" fill="#41bd7c" stroke="#222" stroke-width="1"/><text class="st" x="964.67" y="507.50" font-size="13.33">自定义算法</text>
<rect x="764" y="529" width="148" height="37" fill="#41bd7c" stroke="#222" stroke-width="1"/><text class="st" transform="translate(821.34,553.50) scale(.8333,1)" font-size="13.33" xml:space="preserve">Keras</text>
<rect x="924" y="529" width="148" height="37" fill="#41bd7c" stroke="#222" stroke-width="1"/><text class="st" transform="translate(961.34,553.50) scale(.8333,1)" font-size="13.33" xml:space="preserve">Caffe</text><text class="st" x="994.67" y="553.50" font-size="13.33">等算法</text>
<rect x="150.5" y="594" width="975.5" height="94.5" rx="10" fill="#d6cfc9" stroke="#333" stroke-width="2.2" stroke-dasharray="12 8"/><path d="M150.5,605 A10,10 0 0 1 160.5,594" fill="none" stroke="#333" stroke-width="2.2"/>
<text x="244" y="643" font-size="18.67" text-anchor="middle" class="gl" dominant-baseline="central">并行平台层</text>
<rect x="330.5" y="611.5" width="100.0" height="60.0" fill="#41bd7c" stroke="#222" stroke-width="1"/><text class="st" transform="translate(363.84,647.50) scale(.8333,1)" font-size="13.33" xml:space="preserve">SPARK</text>
<rect x="464.5" y="611.5" width="100.0" height="60.0" fill="#41bd7c" stroke="#222" stroke-width="1"/><text class="st" transform="translate(501.17,647.50) scale(.8333,1)" font-size="13.33" xml:space="preserve">CUDA</text>
<rect x="599" y="611.5" width="100.5" height="60.0" fill="#41bd7c" stroke="#222" stroke-width="1"/><text class="st" transform="translate(639.25,647.50) scale(.8333,1)" font-size="13.33" xml:space="preserve">MPI</text>
<rect x="743" y="611.5" width="101.5" height="60.0" fill="#41bd7c" stroke="#222" stroke-width="1"/><text class="st" transform="translate(773.75,647.50) scale(.8333,1)" font-size="13.33" xml:space="preserve">OpenMP</text>
<rect x="886" y="611.5" width="101.5" height="60.0" fill="#41bd7c" stroke="#222" stroke-width="1"/><text class="st" transform="translate(916.75,647.50) scale(.8333,1)" font-size="13.33" xml:space="preserve">Hadoop</text>
<rect x="1001.5" y="611.5" width="100.5" height="60.0" fill="#41bd7c" stroke="#222" stroke-width="1"/><text class="st" transform="translate(1035.09,647.50) scale(.8333,1)" font-size="13.33" xml:space="preserve">Flink</text>
<rect x="150.5" y="697.5" width="975.5" height="160.5" rx="10" fill="#d6cfc9" stroke="#333" stroke-width="2.2" stroke-dasharray="12 8"/><path d="M150.5,708.5 A10,10 0 0 1 160.5,697.5" fill="none" stroke="#333" stroke-width="2.2"/>
<text x="239" y="772" font-size="18.67" text-anchor="middle" class="gl" dominant-baseline="central">基础资源层</text>
<rect x="330.5" y="708" width="349.5" height="59.5" rx="9" fill="#a0d9f2" stroke="#222" stroke-width="1"/><text x="505.25" y="737.75" font-size="18.67" text-anchor="middle" class="gl" dominant-baseline="central">数据</text>
<rect x="698" y="708" width="404" height="59.5" rx="9" fill="#a0d9f2" stroke="#222" stroke-width="1"/><text x="900.0" y="737.75" font-size="18.67" text-anchor="middle" class="gl" dominant-baseline="central">HDFS</text>
<rect x="330.5" y="783" width="198.0" height="59.5" rx="9" fill="#a0d9f2" stroke="#222" stroke-width="1"/><text x="429.5" y="812.75" font-size="18.67" text-anchor="middle" class="gl" dominant-baseline="central">实体机</text>
<rect x="546.5" y="783" width="555.5" height="59.5" rx="9" fill="#a0d9f2" stroke="#222" stroke-width="1"/><text x="824.25" y="812.75" font-size="18.67" text-anchor="middle" class="gl" dominant-baseline="central">虚拟机</text>
<rect x="1136" y="204.5" width="232" height="653.5" rx="10" fill="#ccd5cd" stroke="#333" stroke-width="2.2" stroke-dasharray="12 8"/><path d="M1136,215.5 A10,10 0 0 1 1146,204.5" fill="none" stroke="#333" stroke-width="2.2"/>
<text x="1252" y="256" font-size="18.67" text-anchor="middle" class="gl" dominant-baseline="central">公共组件</text>
<rect x="1162" y="305" width="46" height="163.5" fill="#fff" stroke="#999" stroke-width="1"/><text x="1185.0" y="362.75" font-size="16" text-anchor="middle" class="gl">数</text><text x="1185.0" y="382.75" font-size="16" text-anchor="middle" class="gl">据</text><text x="1185.0" y="402.75" font-size="16" text-anchor="middle" class="gl">管</text><text x="1185.0" y="422.75" font-size="16" text-anchor="middle" class="gl">理</text>
<rect x="1229" y="305" width="45" height="163.5" fill="#fff" stroke="#999" stroke-width="1"/><text x="1251.5" y="362.75" font-size="16" text-anchor="middle" class="gl">任</text><text x="1251.5" y="382.75" font-size="16" text-anchor="middle" class="gl">务</text><text x="1251.5" y="402.75" font-size="16" text-anchor="middle" class="gl">调</text><text x="1251.5" y="422.75" font-size="16" text-anchor="middle" class="gl">度</text>
<rect x="1294" y="305" width="48" height="163.5" fill="#fff" stroke="#999" stroke-width="1"/><text x="1318.0" y="362.75" font-size="16" text-anchor="middle" class="gl">日</text><text x="1318.0" y="382.75" font-size="16" text-anchor="middle" class="gl">志</text><text x="1318.0" y="402.75" font-size="16" text-anchor="middle" class="gl">管</text><text x="1318.0" y="422.75" font-size="16" text-anchor="middle" class="gl">理</text>
<rect x="1162" y="484.5" width="46" height="164.0" fill="#fff" stroke="#999" stroke-width="1"/><text x="1185.0" y="542.5" font-size="16" text-anchor="middle" class="gl">模</text><text x="1185.0" y="562.5" font-size="16" text-anchor="middle" class="gl">型</text><text x="1185.0" y="582.5" font-size="16" text-anchor="middle" class="gl">管</text><text x="1185.0" y="602.5" font-size="16" text-anchor="middle" class="gl">理</text>
<rect x="1229" y="484.5" width="45" height="164.0" fill="#fff" stroke="#999" stroke-width="1"/><text x="1251.5" y="542.5" font-size="16" text-anchor="middle" class="gl">权</text><text x="1251.5" y="562.5" font-size="16" text-anchor="middle" class="gl">限</text><text x="1251.5" y="582.5" font-size="16" text-anchor="middle" class="gl">管</text><text x="1251.5" y="602.5" font-size="16" text-anchor="middle" class="gl">理</text>
<rect x="1294" y="484.5" width="48" height="164.0" fill="#fff" stroke="#999" stroke-width="1"/><text x="1318.0" y="542.5" font-size="16" text-anchor="middle" class="gl">监</text><text x="1318.0" y="562.5" font-size="16" text-anchor="middle" class="gl">控</text><text x="1318.0" y="582.5" font-size="16" text-anchor="middle" class="gl">告</text><text x="1318.0" y="602.5" font-size="16" text-anchor="middle" class="gl">警</text>
<rect x="1162" y="667" width="46" height="162" fill="#fff" stroke="#999" stroke-width="1"/><text x="1185.0" y="724.0" font-size="16" text-anchor="middle" class="gl">服</text><text x="1185.0" y="744.0" font-size="16" text-anchor="middle" class="gl">务</text><text x="1185.0" y="764.0" font-size="16" text-anchor="middle" class="gl">管</text><text x="1185.0" y="784.0" font-size="16" text-anchor="middle" class="gl">理</text>
<rect x="1229" y="667" width="45" height="162" fill="#fff" stroke="#999" stroke-width="1"/><text x="1251.5" y="724.0" font-size="16" text-anchor="middle" class="gl">资</text><text x="1251.5" y="744.0" font-size="16" text-anchor="middle" class="gl">源</text><text x="1251.5" y="764.0" font-size="16" text-anchor="middle" class="gl">管</text><text x="1251.5" y="784.0" font-size="16" text-anchor="middle" class="gl">理</text>
<rect x="1294" y="667" width="48" height="162" fill="#fff" stroke="#999" stroke-width="1"/><text x="1318.0" y="724.0" font-size="16" text-anchor="middle" class="gl">系</text><text x="1318.0" y="744.0" font-size="16" text-anchor="middle" class="gl">统</text><text x="1318.0" y="764.0" font-size="16" text-anchor="middle" class="gl">配</text><text x="1318.0" y="784.0" font-size="16" text-anchor="middle" class="gl">置</text></svg></div><div id="vscroll"><i></i></div><div id="sidebar"><svg class="ic" style="left:12.0px;top:15.0px" width="14" height="12" viewBox="0 0 14 12" fill="none" ><path d="M6.5,1 L1.5,6 L6.5,11 M12.5,1 L7.5,6 L12.5,11" stroke="#111" stroke-width="2.2"/></svg><svg class="ic" style="left:9.5px;top:52.3px" width="19" height="19" viewBox="0 0 19 19" fill="none" ><path d="M8.5,2.8 L1.6,9.7 Q0.7,10.6 1.6,11.5 L7.6,17.5 Q8.5,18.4 9.4,17.5 L16,10.9 Z" stroke="#2e2e2e" stroke-width="1.8" stroke-linejoin="round"/><path d="M1.2,11 H16 L9.4,17.5 Q8.5,18.4 7.6,17.5 Z" fill="#2e2e2e"/><path d="M6.2,0.8 L10.5,5.1" stroke="#2e2e2e" stroke-width="1.8"/><circle cx="17" cy="16.8" r="1.5" fill="#2e2e2e"/></svg><div class="abs" style="left:3px;top:88px;width:32px;height:32px;background:#e9e9e9;border-radius:2px"></div><svg class="ic" style="left:9.5px;top:94.5px" width="19" height="19" viewBox="0 0 19 19" fill="none" ><path d="M16.5,5.5 V3 Q16.5,1.5 15,1.5 H3 Q1.5,1.5 1.5,3 V15 Q1.5,16.5 3,16.5 H7" stroke="#1478e6" stroke-width="2"/><circle cx="13" cy="12.5" r="2.4" stroke="#1478e6" stroke-width="1.9"/><path d="M13,7.6 V9.4 M13,15.6 V17.4 M8.1,12.5 H9.9 M16.1,12.5 H17.9 M9.5,9 L10.8,10.3 M15.2,14.7 L16.5,16 M9.5,16 L10.8,14.7 M15.2,10.3 L16.5,9" stroke="#1478e6" stroke-width="1.9"/></svg><svg class="ic" style="left:10.5px;top:137.5px" width="17" height="17" viewBox="0 0 17 17" fill="none" ><rect x="1" y="1" width="5.5" height="5.5" stroke="#2e2e2e" stroke-width="1.8"/><rect x="1" y="10.5" width="5.5" height="5.5" stroke="#2e2e2e" stroke-width="1.8"/><rect x="10.5" y="10.5" width="5.5" height="5.5" stroke="#2e2e2e" stroke-width="1.8"/><path d="M10.5,7 V1 H13 M15,1 H16 V3.5 M16,5 V6.5 H12.5" stroke="#2e2e2e" stroke-width="1.8"/></svg><svg class="ic" style="left:10.0px;top:179.5px" width="18" height="18" viewBox="0 0 18 18" fill="none" ><path d="M9,1.5 L16.5,6.5 L9,11.5 L1.5,6.5 Z" stroke="#2e2e2e" stroke-width="1.8" stroke-linejoin="round"/><path d="M1.5,10.5 L9,15.5 L16.5,10.5" stroke="#2e2e2e" stroke-width="1.8" stroke-linejoin="round"/></svg><svg class="ic" style="left:9.0px;top:221.5px" width="20" height="18" viewBox="0 0 20 18" fill="none" ><path d="M0.5,1.5 H19.5" stroke="#2e2e2e" stroke-width="1.8"/><path d="M3,2 V11.5 H17 V2" stroke="#2e2e2e" stroke-width="1.8"/><path d="M8.5,4.5 L12,6.8 L8.5,9 Z" fill="#2e2e2e"/><path d="M8,12 L5,17 M12,12 L15,17" stroke="#2e2e2e" stroke-width="1.8"/></svg><svg class="ic" style="left:10.5px;top:263.5px" width="17" height="17" viewBox="0 0 17 17" fill="none" ><ellipse cx="8.5" cy="4" rx="7" ry="3" stroke="#2e2e2e" stroke-width="1.8"/><path d="M1.5,4 V13 C1.5,17 15.5,17 15.5,13 V4 M1.5,8.5 C1.5,12.5 15.5,12.5 15.5,8.5" stroke="#2e2e2e" stroke-width="1.8"/></svg><svg class="ic" style="left:10.0px;top:306.0px" width="18" height="16" viewBox="0 0 18 16" fill="none" ><rect x="1" y="1" width="16" height="14" rx="1.5" stroke="#2e2e2e" stroke-width="1.8"/><path d="M1.5,12 L6,7.5 L10,11.5 L12.5,9.5 L16.5,13" stroke="#2e2e2e" stroke-width="1.5"/><circle cx="12.5" cy="5" r="1.5" fill="#2e2e2e"/></svg><svg class="ic" style="left:10.0px;top:347.0px" width="18" height="18" viewBox="0 0 18 18" fill="none" ><rect x="6" y="1" width="6" height="5" stroke="#2e2e2e" stroke-width="1.8"/><rect x="1" y="12" width="6" height="5" stroke="#2e2e2e" stroke-width="1.8"/><rect x="11" y="12" width="6" height="5" stroke="#2e2e2e" stroke-width="1.8"/><path d="M9,6 V9 M4,12 V9 H14 V12" stroke="#2e2e2e" stroke-width="1.8"/></svg><svg class="ic" style="left:10.5px;top:389.5px" width="17" height="17" viewBox="0 0 17 17" fill="none" ><rect x="1" y="1" width="15" height="15" stroke="#2e2e2e" stroke-width="1.8"/><path d="M1,9.5 H8 V16 M8,9.5 V5 H16 M8,5 V1 M11.5,9 V16" stroke="#2e2e2e" stroke-width="1.8"/></svg><svg class="ic" style="left:10.0px;top:432.0px" width="18" height="16" viewBox="0 0 18 16" fill="none" ><path d="M3,1.5 H17 M1,7 H13 M10,15 H17" stroke="#2e2e2e" stroke-width="2"/><path d="M13,7 V13 H9" stroke="#2e2e2e" stroke-width="1.8"/></svg><svg class="ic" style="left:10.0px;top:475.5px" width="18" height="14" viewBox="0 0 18 14" fill="none" ><rect x="0.5" y="0.5" width="4" height="3.5" fill="#2e2e2e"/><rect x="13.5" y="0.5" width="4" height="3.5" fill="#2e2e2e"/><rect x="0.5" y="10" width="4" height="3.5" fill="#2e2e2e"/><rect x="13.5" y="10" width="4" height="3.5" fill="#2e2e2e"/><path d="M4.5,2.2 H6 Q7.5,2.2 7.5,4 V10 Q7.5,11.8 6,11.8 H4.5 M13.5,2.2 H12 Q10.5,2.2 10.5,4 V10 Q10.5,11.8 12,11.8 H13.5 M7.5,7 H10.5" stroke="#2e2e2e" stroke-width="1.5"/></svg><svg class="ic" style="left:10.0px;top:515.5px" width="18" height="18" viewBox="0 0 18 18" fill="none" ><path d="M3.2,5 A7,7 0 1 1 2,9" stroke="#2e2e2e" stroke-width="1.8"/><path d="M0.8,2.5 L3.2,6 L6.8,4.2" stroke="#2e2e2e" stroke-width="1.8" stroke-linejoin="round"/><path d="M9,5 V9.5 L12,11" stroke="#2e2e2e" stroke-width="1.8"/></svg></div><div id="bottombar"><svg class="ic" style="left:17.0px;top:11.0px" width="22" height="12" viewBox="0 0 22 12" fill="none" ><path d="M1,0.5 V11.5 M21,0.5 V11.5" stroke="#666" stroke-width="1.4"/><rect x="4.5" y="1.2" width="13" height="9.6" stroke="#555" stroke-width="1.8"/></svg><div class="abs" style="left:63.5px;top:9px;font-size:12px;line-height:16px;color:#555">页-1</div><svg class="ic" style="left:143.0px;top:14.0px" width="9" height="6" viewBox="0 0 9 6" fill="none" ><path d="M0.8,0.8 L4.5,4.8 L8.2,0.8" stroke="#777" stroke-width="1.2"/></svg><div class="vsep" style="left:178px;top:5px;height:24px;background:#e0e0e0"></div><div class="abs" style="left:193.5px;top:7px;font-size:12px;font-weight:bold;line-height:16px;color:#111">页-1</div><svg class="ic" style="left:241.0px;top:11.0px" width="12" height="12" viewBox="0 0 12 12" fill="none" ><path d="M6,0 V12 M0,6 H12" stroke="#222" stroke-width="1.8"/></svg><svg class="ic" style="left:1670.0px;top:16.0px" width="11" height="2" viewBox="0 0 11 2" fill="none" ><path d="M0,1 H11" stroke="#333" stroke-width="1.8"/></svg><div class="abs" style="left:1686px;top:16.5px;width:100px;height:2px;background:#d9d9d9"></div><div class="abs" style="left:1686px;top:16.5px;width:26px;height:2px;background:#bcbcbc"></div><div class="abs" style="left:1708px;top:13px;width:9px;height:9px;border-radius:50%;border:1.5px solid #888;background:#fff"></div><svg class="ic" style="left:1792.0px;top:10.0px" width="12" height="12" viewBox="0 0 12 12" fill="none" ><path d="M6,0 V12 M0,6 H12" stroke="#333" stroke-width="1.5"/></svg><div class="abs" style="left:1814px;top:9px;font-size:12px;line-height:16px;color:#444">100%</div><svg class="ic" style="left:1849.0px;top:15.5px" width="8" height="5" viewBox="0 0 8 5" fill="none" ><path d="M0.6,0.6 L4,4 L7.4,0.6" stroke="#444" stroke-width="1.1"/></svg><svg class="ic" style="left:1875.0px;top:10.5px" width="16" height="15" viewBox="0 0 16 15" fill="none" ><path d="M1,5 V1 H5.5 M10.5,1 H15 V5 M15,10 V14 H10.5 M5.5,14 H1 V10" stroke="#333" stroke-width="1.8"/></svg></div></div><div id="overlay"></div><div id="titlebar"><svg class="ic" style="left:15px;top:4px" width="20" height="20" viewBox="0 0 20 20" fill="none"><path d="M1,2 H9.5 A8,8 0 0 1 9.5,18 H1" stroke="#d6dce6" stroke-width="3.2"/><path d="M1,10 H10" stroke="#d6dce6" stroke-opacity=".6" stroke-width="3"/></svg><div id="doctitle">系统架构图模板1</div><div id="upgrade"><span style="font-size:9px;vertical-align:1px">●</span> 升级到专业版</div><div id="user">百灵鸟</div><svg class="ic" style="left:1892px;top:12px" width="8" height="5" viewBox="0 0 8 5"><path d="M0,0 H8 L4,4.5 Z" fill="#dde8f6"/></svg></div><div class="abs" style="left:0;top:988px;width:1920px;height:2px;background:#fff"><div class="abs" style="left:0;top:0;width:59px;height:2px;background:#e1e1e1"></div></div><div id="dialog"><div id="dlghead"></div><div id="dlgtitle">导出图片</div><svg class="ic" style="left:737px;top:15px" width="12" height="12" viewBox="0 0 12 12"><path d="M1,1 L11,11 M11,1 L1,11" stroke="#222" stroke-width="1.2"/></svg><div id="preview"><svg style="position:absolute;left:1px;top:204px" width="363" height="204" viewBox="111 165 1295 728" preserveAspectRatio="none"><rect x="111" y="165" width="1295" height="732" fill="#fff"/><rect x="150.5" y="204.5" width="975.5" height="79.69999999999999" rx="10" fill="#d6cfc9" stroke="#6e6e6e" stroke-width="2.2" stroke-dasharray="12 8"/><path d="M150.5,215.5 A10,10 0 0 1 160.5,204.5" fill="none" stroke="#6e6e6e" stroke-width="2.2"/>
<text x="252" y="246" font-size="18.67" text-anchor="middle" class="gl" dominant-baseline="central">对外接入层</text>
<rect x="354.5" y="227.5" width="164.0" height="47.0" fill="#41bd7c" stroke="#2c8c5a" stroke-width="2"/><text class="st" transform="translate(403.18,257.00) scale(.8333,1)" font-size="13.33" xml:space="preserve">Web Portal</text>
<rect x="546.5" y="227.5" width="164.0" height="47.0" fill="#41bd7c" stroke="#2c8c5a" stroke-width="2"/><text class="st" transform="translate(601.84,257.00) scale(.8333,1)" font-size="13.33" xml:space="preserve">API </text><text class="st" x="628.50" y="257.00" font-size="13.33">接口</text>
<rect x="742" y="227.5" width="164" height="47.0" fill="#41bd7c" stroke="#2c8c5a" stroke-width="2"/><text class="st" x="784.01" y="257.00" font-size="13.33">命令行客户端</text>
<rect x="937" y="227.5" width="164" height="47.0" fill="#41bd7c" stroke="#2c8c5a" stroke-width="2"/><text class="st" x="995.67" y="257.00" font-size="13.33">开放</text><text class="st" transform="translate(1022.33,257.00) scale(.8333,1)" font-size="13.33" xml:space="preserve">SDK</text>
<rect x="150.5" y="291.5" width="975.5" height="294.5" rx="10" fill="#d6cfc9" stroke="#6e6e6e" stroke-width="2.2" stroke-dasharray="12 8"/><path d="M150.5,302.5 A10,10 0 0 1 160.5,291.5" fill="none" stroke="#6e6e6e" stroke-width="2.2"/>
<text x="244" y="439" font-size="18.67" text-anchor="middle" class="gl" dominant-baseline="central">标准算法层</text>
<rect x="335.5" y="310" width="777.5" height="113.5" rx="10" fill="#d6cfc9" stroke="#6e6e6e" stroke-width="2.2" stroke-dasharray="12 8"/><path d="M335.5,321 A10,10 0 0 1 345.5,310" fill="none" stroke="#6e6e6e" stroke-width="2.2"/>
<text x="359" y="336" font-size="17" text-anchor="start" class="gl" dominant-baseline="central">算法路由</text>
<rect x="354.5" y="363.5" width="100.30000000000001" height="45.0" fill="#41bd7c" stroke="#2c8c5a" stroke-width="2"/><text class="st" x="391.32" y="392.00" font-size="13.33">分类</text>
<rect x="463.2" y="363.5" width="100.30000000000001" height="45.0" fill="#41bd7c" stroke="#2c8c5a" stroke-width="2"/><text class="st" x="500.02" y="392.00" font-size="13.33">聚类</text>
<rect x="572" y="363.5" width="100.29999999999995" height="45.0" fill="#41bd7c" stroke="#2c8c5a" stroke-width="2"/><text class="st" x="608.82" y="392.00" font-size="13.33">回归</text>
<rect x="679.5" y="363.5" width="100.29999999999995" height="45.0" fill="#41bd7c" stroke="#2c8c5a" stroke-width="2"/><text class="st" x="716.32" y="392.00" font-size="13.33">关联</text>
<rect x="787" y="363.5" width="100.29999999999995" height="45.0" fill="#41bd7c" stroke="#2c8c5a" stroke-width="2"/><text class="st" x="823.82" y="392.00" font-size="13.33">推荐</text>
<rect x="894.5" y="363.5" width="100.29999999999995" height="45.0" fill="#41bd7c" stroke="#2c8c5a" stroke-width="2"/><text class="st" x="917.99" y="392.00" font-size="13.33">时间序列</text>
<rect x="1002" y="363.5" width="100.29999999999995" height="45.0" fill="#41bd7c" stroke="#2c8c5a" stroke-width="2"/><text class="st" x="1025.49" y="392.00" font-size="13.33">深度学习</text>
<rect x="335.5" y="430.5" width="341.5" height="143.5" rx="10" fill="#d6cfc9" stroke="#6e6e6e" stroke-width="2.2" stroke-dasharray="12 8"/><path d="M335.5,441.5 A10,10 0 0 1 345.5,430.5" fill="none" stroke="#6e6e6e" stroke-width="2.2"/>
<text x="505" y="454" font-size="17" text-anchor="middle" class="gl" dominant-baseline="central">通用算法库</text>
<rect x="354.5" y="480.5" width="148.0" height="38.0" fill="#41bd7c" stroke="#2c8c5a" stroke-width="2"/><text class="st" transform="translate(411.84,505.50) scale(.8333,1)" font-size="13.33" xml:space="preserve">MLlib</text>
<rect x="512.5" y="480.5" width="150.5" height="38.0" fill="#41bd7c" stroke="#2c8c5a" stroke-width="2"/><text class="st" transform="translate(547.76,505.50) scale(.8333,1)" font-size="13.33" xml:space="preserve">Scikit-Learn</text>
<rect x="354.5" y="527.5" width="148.0" height="38.0" fill="#41bd7c" stroke="#2c8c5a" stroke-width="2"/><text class="st" transform="translate(401.84,552.50) scale(.8333,1)" font-size="13.33" xml:space="preserve">Gensim</text><text class="st" x="441.83" y="552.50" font-size="13.33">等</text>
<rect x="512.5" y="527.5" width="150.5" height="38.0" fill="#41bd7c" stroke="#2c8c5a" stroke-width="2"/><text class="st" x="554.42" y="552.50" font-size="13.33">自定义算法</text>
<rect x="744" y="430.5" width="340" height="143.5" rx="10" fill="#d6cfc9" stroke="#6e6e6e" stroke-width="2.2" stroke-dasharray="12 8"/><path d="M744,441.5 A10,10 0 0 1 754,430.5" fill="none" stroke="#6e6e6e" stroke-width="2.2"/>
<text x="914" y="458" font-size="17" text-anchor="middle" class="gl" dominant-baseline="central">深度学习算法库</text>
<rect x="764" y="483" width="148" height="37" fill="#41bd7c" stroke="#2c8c5a" stroke-width="2"/><text class="st" transform="translate(804.67,507.50) scale(.8333,1)" font-size="13.33" xml:space="preserve">TensorFlow</text>
<rect x="924" y="483" width="148" height="37" fill="#41bd7c" stroke="#2c8c5a" stroke-width="2"/><text class="st" x="964.67" y="507.50" font-size="13.33">自定义算法</text>
<rect x="764" y="529" width="148" height="37" fill="#41bd7c" stroke="#2c8c5a" stroke-width="2"/><text class="st" transform="translate(821.34,553.50) scale(.8333,1)" font-size="13.33" xml:space="preserve">Keras</text>
<rect x="924" y="529" width="148" height="37" fill="#41bd7c" stroke="#2c8c5a" stroke-width="2"/><text class="st" transform="translate(961.34,553.50) scale(.8333,1)" font-size="13.33" xml:space="preserve">Caffe</text><text class="st" x="994.67" y="553.50" font-size="13.33">等算法</text>
<rect x="150.5" y="594" width="975.5" height="94.5" rx="10" fill="#d6cfc9" stroke="#6e6e6e" stroke-width="2.2" stroke-dasharray="12 8"/><path d="M150.5,605 A10,10 0 0 1 160.5,594" fill="none" stroke="#6e6e6e" stroke-width="2.2"/>
<text x="244" y="643" font-size="18.67" text-anchor="middle" class="gl" dominant-baseline="central">并行平台层</text>
<rect x="330.5" y="611.5" width="100.0" height="60.0" fill="#41bd7c" stroke="#2c8c5a" stroke-width="2"/><text class="st" transform="translate(363.84,647.50) scale(.8333,1)" font-size="13.33" xml:space="preserve">SPARK</text>
<rect x="464.5" y="611.5" width="100.0" height="60.0" fill="#41bd7c" stroke="#2c8c5a" stroke-width="2"/><text class="st" transform="translate(501.17,647.50) scale(.8333,1)" font-size="13.33" xml:space="preserve">CUDA</text>
<rect x="599" y="611.5" width="100.5" height="60.0" fill="#41bd7c" stroke="#2c8c5a" stroke-width="2"/><text class="st" transform="translate(639.25,647.50) scale(.8333,1)" font-size="13.33" xml:space="preserve">MPI</text>
<rect x="743" y="611.5" width="101.5" height="60.0" fill="#41bd7c" stroke="#2c8c5a" stroke-width="2"/><text class="st" transform="translate(773.75,647.50) scale(.8333,1)" font-size="13.33" xml:space="preserve">OpenMP</text>
<rect x="886" y="611.5" width="101.5" height="60.0" fill="#41bd7c" stroke="#2c8c5a" stroke-width="2"/><text class="st" transform="translate(916.75,647.50) scale(.8333,1)" font-size="13.33" xml:space="preserve">Hadoop</text>
<rect x="1001.5" y="611.5" width="100.5" height="60.0" fill="#41bd7c" stroke="#2c8c5a" stroke-width="2"/><text class="st" transform="translate(1035.09,647.50) scale(.8333,1)" font-size="13.33" xml:space="preserve">Flink</text>
<rect x="150.5" y="697.5" width="975.5" height="160.5" rx="10" fill="#d6cfc9" stroke="#6e6e6e" stroke-width="2.2" stroke-dasharray="12 8"/><path d="M150.5,708.5 A10,10 0 0 1 160.5,697.5" fill="none" stroke="#6e6e6e" stroke-width="2.2"/>
<text x="239" y="772" font-size="18.67" text-anchor="middle" class="gl" dominant-baseline="central">基础资源层</text>
<rect x="330.5" y="708" width="349.5" height="59.5" rx="9" fill="#a0d9f2" stroke="#7fb4cc" stroke-width="2"/><text x="505.25" y="737.75" font-size="18.67" text-anchor="middle" class="gl" dominant-baseline="central">数据</text>
<rect x="698" y="708" width="404" height="59.5" rx="9" fill="#a0d9f2" stroke="#7fb4cc" stroke-width="2"/><text x="900.0" y="737.75" font-size="18.67" text-anchor="middle" class="gl" dominant-baseline="central">HDFS</text>
<rect x="330.5" y="783" width="198.0" height="59.5" rx="9" fill="#a0d9f2" stroke="#7fb4cc" stroke-width="2"/><text x="429.5" y="812.75" font-size="18.67" text-anchor="middle" class="gl" dominant-baseline="central">实体机</text>
<rect x="546.5" y="783" width="555.5" height="59.5" rx="9" fill="#a0d9f2" stroke="#7fb4cc" stroke-width="2"/><text x="824.25" y="812.75" font-size="18.67" text-anchor="middle" class="gl" dominant-baseline="central">虚拟机</text>
<rect x="1136" y="204.5" width="232" height="653.5" rx="10" fill="#ccd5cd" stroke="#6e6e6e" stroke-width="2.2" stroke-dasharray="12 8"/><path d="M1136,215.5 A10,10 0 0 1 1146,204.5" fill="none" stroke="#6e6e6e" stroke-width="2.2"/>
<text x="1252" y="256" font-size="18.67" text-anchor="middle" class="gl" dominant-baseline="central">公共组件</text>
<rect x="1162" y="305" width="46" height="163.5" fill="#fff" stroke="#999" stroke-width="1"/><text x="1185.0" y="362.75" font-size="16" text-anchor="middle" class="gl">数</text><text x="1185.0" y="382.75" font-size="16" text-anchor="middle" class="gl">据</text><text x="1185.0" y="402.75" font-size="16" text-anchor="middle" class="gl">管</text><text x="1185.0" y="422.75" font-size="16" text-anchor="middle" class="gl">理</text>
<rect x="1229" y="305" width="45" height="163.5" fill="#fff" stroke="#999" stroke-width="1"/><text x="1251.5" y="362.75" font-size="16" text-anchor="middle" class="gl">任</text><text x="1251.5" y="382.75" font-size="16" text-anchor="middle" class="gl">务</text><text x="1251.5" y="402.75" font-size="16" text-anchor="middle" class="gl">调</text><text x="1251.5" y="422.75" font-size="16" text-anchor="middle" class="gl">度</text>
<rect x="1294" y="305" width="48" height="163.5" fill="#fff" stroke="#999" stroke-width="1"/><text x="1318.0" y="362.75" font-size="16" text-anchor="middle" class="gl">日</text><text x="1318.0" y="382.75" font-size="16" text-anchor="middle" class="gl">志</text><text x="1318.0" y="402.75" font-size="16" text-anchor="middle" class="gl">管</text><text x="1318.0" y="422.75" font-size="16" text-anchor="middle" class="gl">理</text>
<rect x="1162" y="484.5" width="46" height="164.0" fill="#fff" stroke="#999" stroke-width="1"/><text x="1185.0" y="542.5" font-size="16" text-anchor="middle" class="gl">模</text><text x="1185.0" y="562.5" font-size="16" text-anchor="middle" class="gl">型</text><text x="1185.0" y="582.5" font-size="16" text-anchor="middle" class="gl">管</text><text x="1185.0" y="602.5" font-size="16" text-anchor="middle" class="gl">理</text>
<rect x="1229" y="484.5" width="45" height="164.0" fill="#fff" stroke="#999" stroke-width="1"/><text x="1251.5" y="542.5" font-size="16" text-anchor="middle" class="gl">权</text><text x="1251.5" y="562.5" font-size="16" text-anchor="middle" class="gl">限</text><text x="1251.5" y="582.5" font-size="16" text-anchor="middle" class="gl">管</text><text x="1251.5" y="602.5" font-size="16" text-anchor="middle" class="gl">理</text>
<rect x="1294" y="484.5" width="48" height="164.0" fill="#fff" stroke="#999" stroke-width="1"/><text x="1318.0" y="542.5" font-size="16" text-anchor="middle" class="gl">监</text><text x="1318.0" y="562.5" font-size="16" text-anchor="middle" class="gl">控</text><text x="1318.0" y="582.5" font-size="16" text-anchor="middle" class="gl">告</text><text x="1318.0" y="602.5" font-size="16" text-anchor="middle" class="gl">警</text>
<rect x="1162" y="667" width="46" height="162" fill="#fff" stroke="#999" stroke-width="1"/><text x="1185.0" y="724.0" font-size="16" text-anchor="middle" class="gl">服</text><text x="1185.0" y="744.0" font-size="16" text-anchor="middle" class="gl">务</text><text x="1185.0" y="764.0" font-size="16" text-anchor="middle" class="gl">管</text><text x="1185.0" y="784.0" font-size="16" text-anchor="middle" class="gl">理</text>
<rect x="1229" y="667" width="45" height="162" fill="#fff" stroke="#999" stroke-width="1"/><text x="1251.5" y="724.0" font-size="16" text-anchor="middle" class="gl">资</text><text x="1251.5" y="744.0" font-size="16" text-anchor="middle" class="gl">源</text><text x="1251.5" y="764.0" font-size="16" text-anchor="middle" class="gl">管</text><text x="1251.5" y="784.0" font-size="16" text-anchor="middle" class="gl">理</text>
<rect x="1294" y="667" width="48" height="162" fill="#fff" stroke="#999" stroke-width="1"/><text x="1318.0" y="724.0" font-size="16" text-anchor="middle" class="gl">系</text><text x="1318.0" y="744.0" font-size="16" text-anchor="middle" class="gl">统</text><text x="1318.0" y="764.0" font-size="16" text-anchor="middle" class="gl">配</text><text x="1318.0" y="784.0" font-size="16" text-anchor="middle" class="gl">置</text></svg></div><div class="fs" style="top:72px;height:160px"><div class="lg">尺寸</div></div><div class="rd on" style="left:406px;top:95px"></div><div class="lb" style="left:426px;top:95px;">原始大小</div><div class="rd " style="left:406px;top:135px"></div><div class="lb" style="left:426px;top:135px;">使用缩放</div><div class="inp " style="left:486px;top:131px;width:70px">100%</div><div class="rd " style="left:406px;top:175px"></div><div class="lb" style="left:426px;top:175px;">适应大小</div><div class="inp " style="left:486px;top:171px;width:70px">1344</div><div class="lb" style="left:566px;top:175px;font-size:11px">x</div><div class="inp " style="left:582px;top:171px;width:70px">816</div><div class="inp" style="left:667px;top:171px;width:70px;color:#222;padding-left:9px">像素<svg class="ic" style="left:49px;top:8px" width="9" height="6" viewBox="0 0 9 6" fill="none"><path d="M0.7,0.7 L4.5,4.5 L8.3,0.7" stroke="#c4c4c4" stroke-width="1.2"/></svg></div><div class="abs" style="left:652px;top:204px;width:14px;height:14px;border:1px solid #e0e0e0;border-radius:2px;background:#f5f5f5"></div><div class="lb" style="left:670px;top:204px;">保持横纵比</div><div class="fs" style="top:257px;height:155px"><div class="lg">形状</div></div><div class="rd on" style="left:406px;top:280px"></div><div class="lb" style="left:426px;top:280px;">整页</div><div class="rd dis" style="left:406px;top:310px"></div><div class="lb" style="left:426px;top:310px;">选中的形状</div><div class="rd " style="left:406px;top:340px"></div><div class="lb" style="left:426px;top:340px;">所有页</div><div class="rd " style="left:406px;top:370px"></div><div class="lb" style="left:426px;top:370px;">当前活动页所有形状</div><div class="fs" style="top:437px;height:57px"><div class="lg">边距</div></div><div class="lb" style="left:410px;top:456px;color:#444">X:</div><div class="inp en" style="left:431px;top:453px;width:70px">0</div><div class="lb" style="left:529.5px;top:456px;color:#444">Y:</div><div class="inp en" style="left:550px;top:453px;width:70px">0</div><div class="fs" style="top:519px;height:60px"><div class="lg">格式</div></div><div class="rd on" style="left:406px;top:542.5px"></div><div class="lb" style="left:426px;top:542.5px;">导出PNG</div><div class="rd " style="left:514.5px;top:542.5px"></div><div class="lb" style="left:535px;top:542.5px;">透明PNG</div><div class="rd " style="left:624px;top:542.5px"></div><div class="lb" style="left:643.5px;top:542.5px;">JPEG</div><div class="fs" style="top:604px;height:80px"><div class="lg">分辨率</div></div><div class="rd " style="left:406px;top:621px"></div><div class="lb" style="left:426px;top:621px;">清晰</div><div class="rd on" style="left:490px;top:621px"></div><div class="lb" style="left:510px;top:621px;">高清</div><div class="rd " style="left:574px;top:621px"></div><div class="lb" style="left:594px;top:621px;">超清</div><div class="rd " style="left:406px;top:651.5px"></div><div class="lb" style="left:426px;top:651.5px;">自定义</div><div class="inp " style="left:474px;top:648px;width:70px">600</div><div class="lb" style="left:554.5px;top:651.3px;font-size:11px">x</div><div class="inp " style="left:570px;top:648px;width:70px">600</div><div class="lb" style="left:654px;top:651.5px;">像素 / 英寸</div><div class="btn" style="left:585px;background:#0a7cff;color:#fff;font-weight:bold">确定</div><div class="btn" style="left:675px;background:#d8dade;color:#222">取消</div></div></body></html>
